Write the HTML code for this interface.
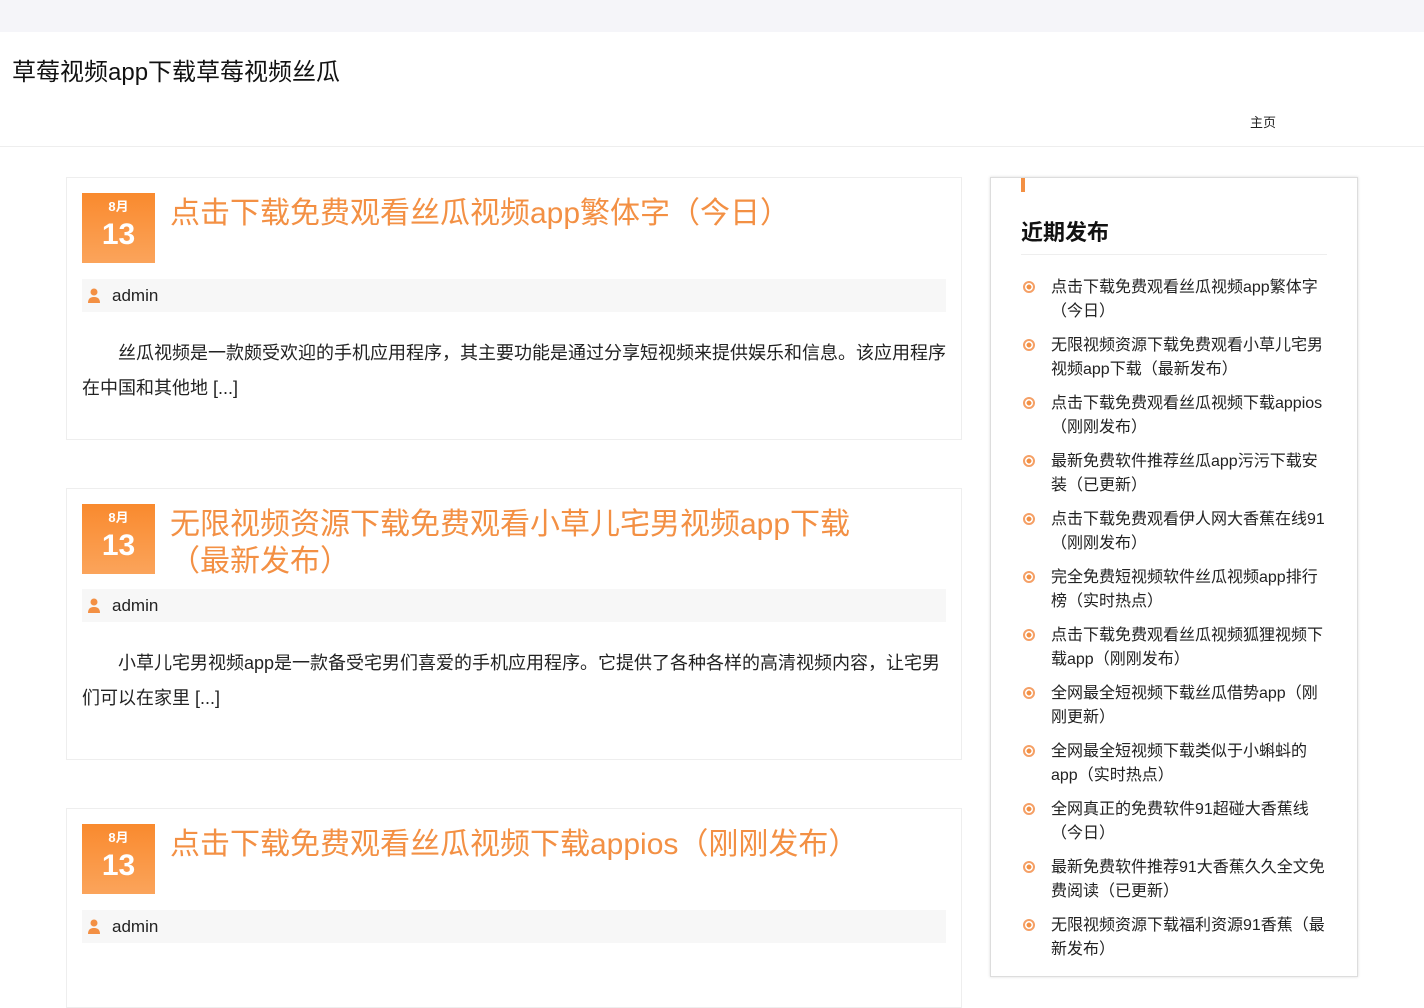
<!DOCTYPE html>
<html><head><meta charset="utf-8"><style>
*{margin:0;padding:0;box-sizing:border-box}
body{width:1424px;height:933px;overflow:hidden;background:#fff;font-family:"Liberation Sans","Noto Sans CJK SC",sans-serif;color:#222}
.top{height:32px;background:#f5f5f9}
.hdr{height:115px;border-bottom:1px solid #eee;position:relative}
.site{position:absolute;left:12px;top:20px;width:330px;font-size:24px;line-height:42px;color:#111}
.nav{position:absolute;left:1250px;top:80px;font-size:13px;color:#222}
.card{position:absolute;left:66px;width:896px;border:1px solid #eee;background:#fff;padding:15px}
.date{position:absolute;left:15px;top:15px;width:73px;height:70px;background:linear-gradient(#f98a2e,#fba45b);color:#fff;text-align:center;font-weight:bold}
.date .m{font-size:13px;margin-top:6px;line-height:16px}
.date .d{font-size:30px;line-height:40px}
.title{margin-left:88px;min-height:86px;font-size:30px;line-height:37px;color:#f39044;padding-top:2px;padding-right:40px}
.meta{height:33px;background:#f7f7f7;font-size:17px;line-height:33px;padding-left:30px;position:relative}
.meta svg{position:absolute;left:5px;top:9px}
.ex{font-size:18px;line-height:35px;text-indent:2em;margin-top:24px;color:#222}
.side{position:absolute;left:990px;top:177px;width:368px;height:800px;border:1px solid #ddd;box-shadow:0 0 3px #ddd}
.bar{position:absolute;left:30px;top:0;width:4px;height:14px;background:#f39044}
.side h3{position:absolute;left:30px;top:40px;width:306px;font-size:22px;line-height:30px;padding-bottom:6px;border-bottom:1px solid #eee;color:#111}
.side ul{position:absolute;left:30px;top:98px;width:310px;list-style:none}
.side li{position:relative;padding-left:30px;font-size:16px;line-height:24px;margin-bottom:10px;color:#222}
.side li:before{content:"";position:absolute;left:2px;top:5px;width:8px;height:8px;border:2px solid #f5a066;border-radius:50%;background:radial-gradient(#f39044 40%,#fff 45%)}
</style></head><body>
<div class="top"></div>
<div class="hdr"><div class="site">草莓视频app下载草莓视频丝瓜</div><div class="nav">主页</div></div>

<div class="card" style="top:177px;height:263px">
<div class="date"><div class="m">8月</div><div class="d">13</div></div>
<div class="title">点击下载免费观看丝瓜视频app繁体字（今日）</div>
<div class="meta"><svg width="14" height="15" viewBox="0 0 14 15"><circle cx="7" cy="4" r="3.5" fill="#f39044"/><path d="M1 15c0-5 3-6 6-6s6 1 6 6z" fill="#f39044"/></svg>admin</div>
<div class="ex">丝瓜视频是一款颇受欢迎的手机应用程序，其主要功能是通过分享短视频来提供娱乐和信息。该应用程序在中国和其他地 [...]</div>
</div>

<div class="card" style="top:488px;height:272px">
<div class="date"><div class="m">8月</div><div class="d">13</div></div>
<div class="title">无限视频资源下载免费观看小草儿宅男视频app下载（最新发布）</div>
<div class="meta" style="margin-top:-1px"><svg width="14" height="15" viewBox="0 0 14 15"><circle cx="7" cy="4" r="3.5" fill="#f39044"/><path d="M1 15c0-5 3-6 6-6s6 1 6 6z" fill="#f39044"/></svg>admin</div>
<div class="ex">小草儿宅男视频app是一款备受宅男们喜爱的手机应用程序。它提供了各种各样的高清视频内容，让宅男们可以在家里 [...]</div>
</div>

<div class="card" style="top:808px;height:200px">
<div class="date"><div class="m">8月</div><div class="d">13</div></div>
<div class="title">点击下载免费观看丝瓜视频下载appios（刚刚发布）</div>
<div class="meta"><svg width="14" height="15" viewBox="0 0 14 15"><circle cx="7" cy="4" r="3.5" fill="#f39044"/><path d="M1 15c0-5 3-6 6-6s6 1 6 6z" fill="#f39044"/></svg>admin</div>
</div>

<div class="side"><div class="bar"></div><h3>近期发布</h3>
<ul>
<li>点击下载免费观看丝瓜视频app繁体字（今日）</li>
<li>无限视频资源下载免费观看小草儿宅男视频app下载（最新发布）</li>
<li>点击下载免费观看丝瓜视频下载appios（刚刚发布）</li>
<li>最新免费软件推荐丝瓜app污污下载安装（已更新）</li>
<li>点击下载免费观看伊人网大香蕉在线91（刚刚发布）</li>
<li>完全免费短视频软件丝瓜视频app排行榜（实时热点）</li>
<li>点击下载免费观看丝瓜视频狐狸视频下载app（刚刚发布）</li>
<li>全网最全短视频下载丝瓜借势app（刚刚更新）</li>
<li>全网最全短视频下载类似于小蝌蚪的app（实时热点）</li>
<li>全网真正的免费软件91超碰大香蕉线（今日）</li>
<li>最新免费软件推荐91大香蕉久久全文免费阅读（已更新）</li>
<li>无限视频资源下载福利资源91香蕉（最新发布）</li>
</ul></div>
</body></html>
